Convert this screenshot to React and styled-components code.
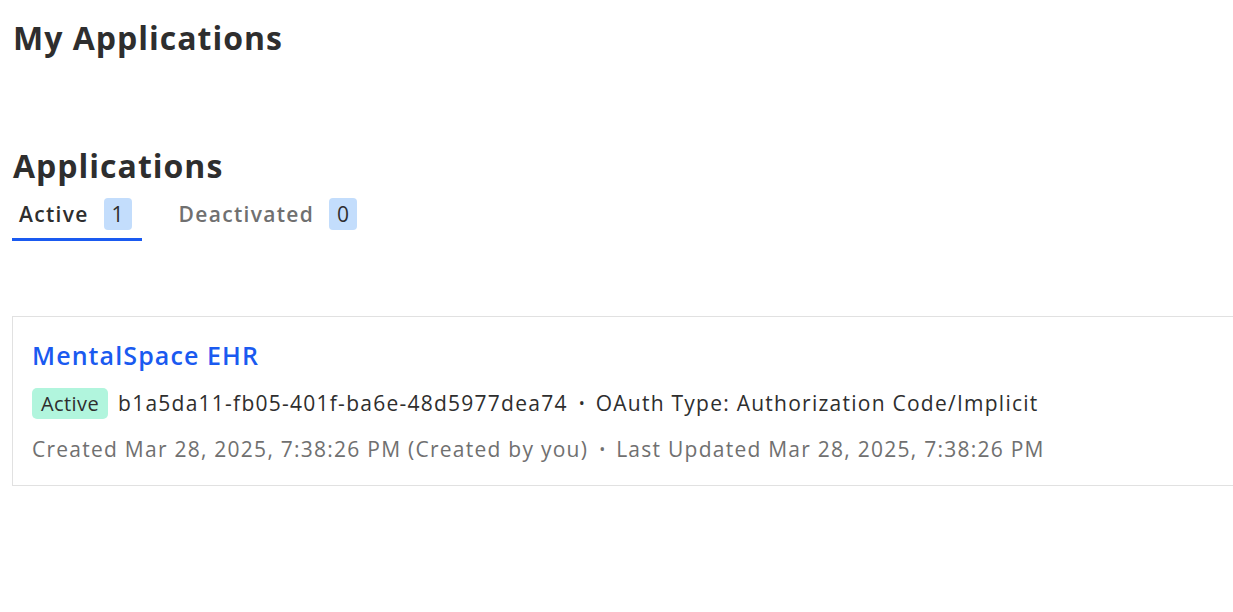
import styled, { createGlobalStyle } from "styled-components"

const GlobalStyle = createGlobalStyle`
  body {
    margin: 0;
    background: #fff;
    font-family: "Open Sans", "Noto Sans", sans-serif;
    color: #2e2e2e;
  }
`

const tabs = [
  { label: 'Active', count: 1, selected: true },
  { label: 'Deactivated', count: 0 },
]

const App = () => {
  return (
    <>
      <GlobalStyle />
      <Page>
        <PageTitle>My Applications</PageTitle>
        <SectionTitle>Applications</SectionTitle>
        <TabList>
          {tabs.map(tab => (
            <Tab key={tab.label} selected={tab.selected}>
              <span>{tab.label}</span>
              <Count>{tab.count}</Count>
            </Tab>
          ))}
        </TabList>
        <Card>
          <AppName href="#">MentalSpace EHR</AppName>
          <Row>
            <Status>Active</Status>
            <span>b1a5da11-fb05-401f-ba6e-48d5977dea74</span>
            <Dot>•</Dot>
            <span>OAuth Type: Authorization Code/Implicit</span>
          </Row>
          <Meta>
            <span>Created Mar 28, 2025, 7:38:26 PM (Created by you)</span>
            <Dot>•</Dot>
            <span>Last Updated Mar 28, 2025, 7:38:26 PM</span>
          </Meta>
        </Card>
      </Page>
    </>
  )
}

const Page = styled.div`
  padding: 16px 0 0 12px;
  width: 1240px;
`

const PageTitle = styled.h1`
  margin: 0 0 0 1px;
  font-size: 32px;
  font-weight: 700;
  line-height: 44px;
  letter-spacing: 1px;
  color: #2e2e2e;
`

const SectionTitle = styled.h2`
  margin: 84px 0 0 1px;
  font-size: 32px;
  font-weight: 700;
  line-height: 44px;
  letter-spacing: 1px;
  color: #2e2e2e;
`

const TabList = styled.div`
  display: flex;
  gap: 30px;
  margin-top: 2px;
`

const Tab = styled.div`
  display: flex;
  align-items: center;
  gap: 15px;
  height: 48px;
  padding: 0 10px 0 7px;
  font-size: 21px;
  font-weight: 600;
  letter-spacing: 1.3px;
  color: ${p => (p.selected ? '#2e2e2e' : '#707070')};
  border-bottom: 3px solid ${p => (p.selected ? '#1a5af0' : 'transparent')};
`

const Count = styled.span`
  display: inline-flex;
  align-items: center;
  justify-content: center;
  height: 32px;
  padding: 0 8px;
  box-sizing: border-box;
  border-radius: 4px;
  background: #c3ddfc;
  color: #2e2e2e;
  font-weight: 400;
  font-size: 21px;
  letter-spacing: 0;
`

const Card = styled.div`
  margin-top: 75px;
  border: 1px solid #e1e1e1;
  padding: 20px 19px 20px 19px;
  display: flex;
  flex-direction: column;
  gap: 14px;
`

const AppName = styled.a`
  font-size: 25px;
  font-weight: 600;
  letter-spacing: 1.1px;
  color: #1a5af0;
  text-decoration: none;
  line-height: 36px;
`

const Row = styled.div`
  display: flex;
  align-items: center;
  gap: 10px;
  height: 32px;
  font-size: 21px;
  letter-spacing: 1.25px;
  color: #2e2e2e;
`

const Meta = styled(Row)`
  color: #707070;
`

const Status = styled.span`
  padding: 2px 9px;
  border-radius: 5px;
  background: #b1f5dd;
  color: #2e2e2e;
  font-size: 20px;
  letter-spacing: 0.4px;
`

const Dot = styled.span`
  margin: 0 1px;
  font-size: 16px;
  letter-spacing: 0;
`

export default App
